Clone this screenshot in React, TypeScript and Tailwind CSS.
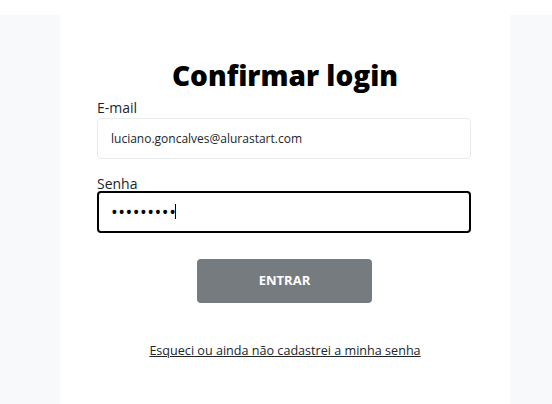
import { useState } from 'react'

export default function App() {
  const [email, setEmail] = useState('luciano.goncalves@alurastart.com')
  const [senha, setSenha] = useState('123456789')

  return (
    <div className="min-h-[404px] w-[552px] bg-white pt-[15px] font-['Open_Sans',sans-serif]">
      <div className="flex h-[389px] bg-[#f8f9fb]">
        <div className="ml-[60px] w-[450px] bg-white px-[37px] pt-[40px]">
          <h1 className="text-center text-[28px] font-extrabold leading-[40px] text-black">
            Confirmar login
          </h1>
          <form className="mt-[4px] flex flex-col" onSubmit={(e) => e.preventDefault()}>
            <label className="text-[14px] leading-[18px] text-[#212529]">E-mail</label>
            <input
              type="email"
              value={email}
              onChange={(e) => setEmail(e.target.value)}
              className="mt-[1px] h-[41px] w-[374px] rounded-[4px] border border-[#e9ecef] px-[13px] text-[12px] text-[#212529] outline-none"
            />
            <label className="mt-[16px] text-[14px] leading-[18px] text-[#212529]">Senha</label>
            <div className="relative mt-[-2px]">
              <input
                type="password"
                value={senha}
                onChange={(e) => setSenha(e.target.value)}
                className="h-[42px] w-[374px] rounded-[4px] border-2 border-black px-[12px] text-[18px] tracking-[0.5px] text-black caret-transparent outline-none"
              />
              <span className="pointer-events-none absolute left-[78px] top-[13px] h-[15px] w-px bg-black" />
            </div>
            <button
              type="submit"
              className="ml-[100px] mt-[26px] h-[44px] w-[175px] rounded-[4px] bg-[#767b80] text-[13px] font-bold text-white"
            >
              ENTRAR
            </button>
          </form>
          <p className="mt-[39px] text-center text-[12.6px] leading-[18px]">
            <a href="#" className="text-[#212529] underline">
              Esqueci ou ainda não cadastrei a minha senha
            </a>
          </p>
        </div>
      </div>
    </div>
  )
}
